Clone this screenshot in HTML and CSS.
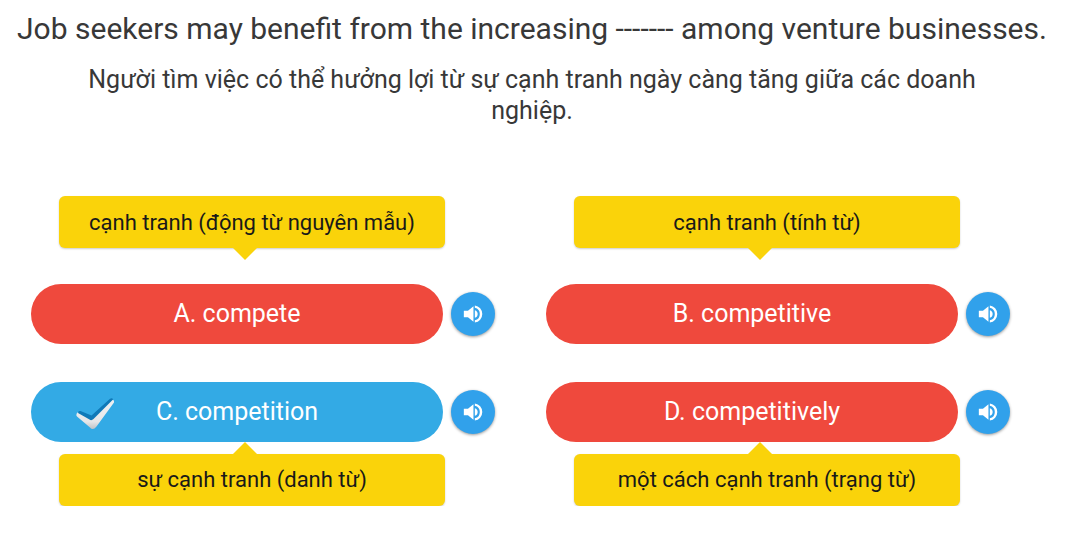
FILE: index.html
```html
<!DOCTYPE html>
<html lang="vi">
<head>
<meta charset="utf-8">
<meta name="viewport" content="width=device-width, initial-scale=1">
<title>Job seekers quiz</title>
<link rel="stylesheet" href="styles.css">
</head>
<body>
<svg class="defs" aria-hidden="true">
  <symbol id="speaker" viewBox="0 0 24 24">
    <path d="M2 8.500v7h4.500l6 5V3.500l-6 5z"/>
    <path d="M14 7.800v8.400a4.400 4.400 0 0 0 0-8.400z"/>
    <path d="M14 2.600v2.500a7.100 7.100 0 0 1 0 13.800v2.500a9.500 9.500 0 0 0 0-18.800z"/>
  </symbol>
</svg>
<main class="quiz">
  <h1 class="question">Job seekers may benefit from the increasing ------- among venture businesses.</h1>
  <p class="translation">Người tìm việc có thể hưởng lợi từ sự cạnh tranh ngày càng tăng giữa các doanh nghiệp.</p>
  <div class="answers">
    <section class="answer">
      <p class="tip tip-above">cạnh tranh (động từ nguyên mẫu)</p>
      <div class="choice-row">
        <button class="choice" type="button">A. compete</button>
        <button class="listen" type="button" aria-label="Nghe A"><svg class="icon"><use href="#speaker"/></svg></button>
      </div>
    </section>
    <section class="answer">
      <p class="tip tip-above">cạnh tranh (tính từ)</p>
      <div class="choice-row">
        <button class="choice" type="button">B. competitive</button>
        <button class="listen" type="button" aria-label="Nghe B"><svg class="icon"><use href="#speaker"/></svg></button>
      </div>
    </section>
    <section class="answer">
      <div class="choice-row">
        <button class="choice choice-correct" type="button">
          <svg class="check" viewBox="0 0 42 36" aria-hidden="true">
            <defs>
              <linearGradient id="silver" x1="0" y1="0" x2="0" y2="1">
                <stop offset="0.3" stop-color="#eceef0"/>
                <stop offset="0.75" stop-color="#e6e6e8"/>
                <stop offset="1" stop-color="#bfc2c6"/>
              </linearGradient>
            </defs>
            <path fill="url(#silver)" d="M2.500 18Q3 15.500 6 16.500L18 22 37 4Q40.500 3 40 6.500L22.500 30.500Q19 35 16 31.500L3 20.500Q2 19.500 2.500 18z"/>
            <path fill="#0f79b8" d="M4 17Q4 14.500 6.500 15L17.500 19.500 36 2.800Q38.500 1.500 39 3.500L19.500 23Q17.500 25 15.500 23.500z"/>
          </svg>
          C. competition
        </button>
        <button class="listen" type="button" aria-label="Nghe C"><svg class="icon"><use href="#speaker"/></svg></button>
      </div>
      <p class="tip tip-below">sự cạnh tranh (danh từ)</p>
    </section>
    <section class="answer">
      <div class="choice-row">
        <button class="choice" type="button">D. competitively</button>
        <button class="listen" type="button" aria-label="Nghe D"><svg class="icon"><use href="#speaker"/></svg></button>
      </div>
      <p class="tip tip-below">một cách cạnh tranh (trạng từ)</p>
    </section>
  </div>
</main>
</body>
</html>
```
FILE: styles.css
```css
* { box-sizing: border-box; }
body {
  margin: 0;
  background: #fff;
  color: #383838;
  font-family: Roboto, "Noto Sans", sans-serif;
}
.defs { position: absolute; width: 0; height: 0; }
.quiz { padding-right: 16px; }
.question {
  margin: 0;
  padding: 9px 16px 0;
  font-size: 30px;
  line-height: 40px;
  font-weight: 400;
  text-align: center;
}
.translation {
  margin: 15px 0 0;
  padding: 0 64px;
  font-size: 25px;
  line-height: 31px;
  text-align: center;
}
.answers {
  display: grid;
  grid-template-columns: 1fr 1fr;
  gap: 38px 51px;
  padding: 70px 54px 0 31px;
}
.choice-row { display: flex; align-items: center; gap: 8px; }
.choice {
  position: relative;
  flex: 1;
  height: 60px;
  padding: 0 16px;
  border: 0;
  border-radius: 30px;
  background: #ef493d;
  color: #fff;
  font: 400 25px/32px Roboto, "Noto Sans", sans-serif;
  text-align: center;
}
.choice-correct { background: #33aae5; }
.check {
  position: absolute;
  left: 43px;
  top: 14px;
  width: 42px;
  height: 36px;
}
.listen {
  display: flex;
  align-items: center;
  justify-content: center;
  width: 44px;
  height: 44px;
  padding: 0;
  border: 0;
  border-radius: 50%;
  background: #31a1eb;
  box-shadow: 0 1px 3px rgba(0, 0, 0, 0.4);
}
.icon { width: 22px; height: 22px; fill: #fff; }
.tip {
  position: relative;
  margin: 0 50px 0 28px;
  padding: 11px 8px 9px;
  border-radius: 6px;
  background: #fad30a;
  box-shadow: 0 1px 2px rgba(0, 0, 0, 0.2);
  color: #191919;
  font-size: 22px;
  line-height: 32px;
  text-align: center;
}
.tip::after {
  content: "";
  position: absolute;
  left: 45%;
  border: 12px solid transparent;
}
.tip-above { margin-bottom: 36px; }
.tip-above::after { top: 100%; border-top-color: #fad30a; border-bottom: 0; }
.tip-below { margin-top: 12px; padding: 10px 8px; }
.tip-below::after { bottom: 100%; border-bottom-color: #fad30a; border-top: 0; }
```
